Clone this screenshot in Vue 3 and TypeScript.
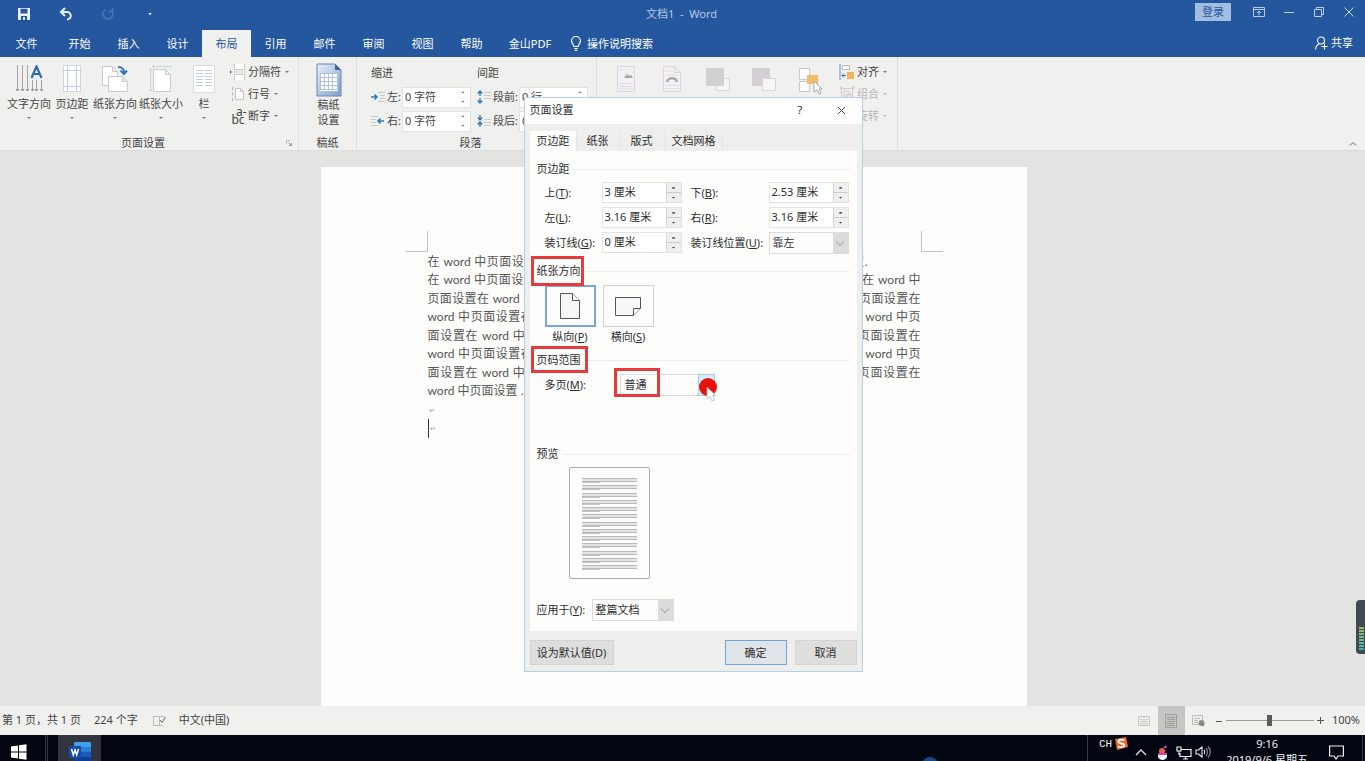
<script setup lang="ts">
import { ref } from 'vue'

const tabs = ['开始', '插入', '设计', '布局', '引用', '邮件', '审阅', '视图', '帮助']
const activeTab = ref('布局')

const phrase = (start: string, count: number, end: string) => start.repeat(count) + end
const lines = [
  { text: phrase('在 word 中页面设置', 4, '.'), kind: 'part' },
  { text: phrase('在 word 中页面设置', 4, '在 word 中'), kind: 'full' },
  { text: phrase('页面设置在 word 中', 4, '页面设置在'), kind: 'full' },
  { text: phrase('word 中页面设置在 ', 4, 'word 中页'), kind: 'full' },
  { text: phrase('面设置在 word 中页', 4, '面设置在'), kind: 'full' },
  { text: phrase('word 中页面设置在 ', 4, 'word 中页'), kind: 'full' },
  { text: phrase('面设置在 word 中页', 4, '面设置在'), kind: 'full' },
  { text: 'word 中页面设置 .', kind: 'last' }
]

const dialogTabs = ['页边距', '纸张', '版式', '文档网格']
const activeDialogTab = ref('页边距')

const margins = ref([
  { id: 'top', name: '上', key: 'T', value: '3 厘米' },
  { id: 'bottom', name: '下', key: 'B', value: '2.53 厘米' },
  { id: 'left', name: '左', key: 'L', value: '3.16 厘米' },
  { id: 'right', name: '右', key: 'R', value: '3.16 厘米' },
  { id: 'gutter', name: '装订线', key: 'G', value: '0 厘米' }
])
const landscape = ref(false)
const zoom = ref(50)
</script>

<template>
  <div class="app">
    <header class="titlebar">
      <div class="quick">
        <button aria-label="保存">
          <svg width="14" height="14" viewBox="0 0 14 14"><path d="M1 1h12v12H1z" fill="#e6f0fb" /><path d="M3.5 1.8h7v4.6h-7zM4 9h6v4H4z" fill="#25579e" /><path d="M6 10h2v3H6z" fill="#e6f0fb" /></svg>
        </button>
        <button aria-label="撤消">
          <svg width="14" height="14" viewBox="0 0 14 14" fill="none" stroke="#e6f0fb" stroke-width="2"><path d="M2 5h6a3.6 3.6 0 0 1 0 7.500" /><path d="M6 1 2 5l4 4" /></svg>
        </button>
        <button aria-label="重复">
          <svg width="14" height="14" viewBox="0 0 14 14" fill="none" stroke="#4a75b3" stroke-width="1.600"><path d="M4.500 2.700A5 5 0 1 0 11 4" /><path d="M7.500 4.500H11.500V1" /></svg>
        </button>
        <button aria-label="自定义"><i class="caret light"></i></button>
      </div>
      <div class="doc-title">文档1&nbsp; -&nbsp; Word</div>
      <div class="window-tools">
        <button class="login">登录</button>
        <button aria-label="功能区显示选项">
          <svg width="12" height="10" viewBox="0 0 12 10" fill="none" stroke="#b9cde8"><path d="M.5.500h11v9H.5zM.5 2.500h11M6 8.500V4.500M4 6l2-2 2 2" /></svg>
        </button>
        <button aria-label="最小化">
          <svg width="10" height="10" viewBox="0 0 10 10" stroke="#b9cde8"><path d="M0 5.500h10" /></svg>
        </button>
        <button aria-label="还原">
          <svg width="10" height="10" viewBox="0 0 10 10" fill="none" stroke="#b9cde8"><path d="M.5 2.500h7v7h-7zM2.500 2V.5h7v7H8" /></svg>
        </button>
        <button aria-label="关闭">
          <svg width="10" height="10" viewBox="0 0 10 10" stroke="#c9d9ee"><path d="M.5.500l9 9M9.500.500l-9 9" /></svg>
        </button>
      </div>
    </header>

    <nav class="tabs">
      <button class="file">文件</button>
      <button v-for="t in tabs" :key="t" :class="{ on: t === activeTab }" @click="activeTab = t">{{ t }}</button>
      <button class="wide">金山PDF</button>
      <button class="tell">
        <svg width="12" height="15" viewBox="0 0 12 15" fill="none" stroke="#fff" stroke-width="1.200"><path d="M4 10.500C4 8.500 1.500 7.800 1.500 5a4.500 4.500 0 0 1 9 0c0 2.800-2.500 3.500-2.500 5.500zM4 12.500h4M4.800 14.300h2.400" /></svg>
        操作说明搜索
      </button>
      <button class="share">
        <svg width="13" height="14" viewBox="0 0 13 14" fill="none" stroke="#fff" stroke-width="1.100"><circle cx="6" cy="4.500" r="3.500" /><path d="M.6 13.500C.8 10.500 2.500 8.500 4.500 7.800M9.500 7.500v6M6.500 10.500h6" /></svg>
        共享
      </button>
    </nav>

    <section class="ribbon">
      <div class="group g-page">
        <div class="content">
          <button class="big w46">
            <svg width="28" height="28" viewBox="0 0 28 28" fill="none" stroke="#a3a3a3"><path d="M2.500 0v25M7.500 0v25M12.500 0v25M17.500 15v10M21.500 15v10M26.500 15v10" /><path d="M1 24l1.500 2L4 24M6 24l1.500 2L9 24M11 24l1.500 2 1.500-2M16 24l1.500 2 1.500-2M20 24l1.500 2 1.500-2M25 24l1.500 2 1.500-2" stroke="#8a8a8a" /><path d="M16.500 13 21.500 1.500 26.500 13M18.500 9h6" stroke="#2b6cb0" stroke-width="2.200" /></svg>
            <span>文字方向</span><i class="caret"></i>
          </button>
          <button class="big w40">
            <svg width="20" height="28" viewBox="0 0 20 28" fill="none"><path d="M1.500.500h17v26h-17z" fill="#fff" stroke="#d0d3d8" /><path d="M5.500 1v25M14.500 1v25M2 5.500h16M2 21.500h16" stroke="#b7cde8" /></svg>
            <span>页边距</span><i class="caret"></i>
          </button>
          <button class="big w46">
            <svg width="28" height="28" viewBox="0 0 28 28" fill="#fff" stroke="#cacaca"><path d="M1.500 1.500h10l5 5v14h-15zM11.500 1.500v5h5" /><path d="M7.500 11.500h14l5 5v10h-19zM21.500 11.500v5h5" /><path d="M17 2c5 0 6 2 6 6M19.500 5.500 23 9l3-3.500" fill="none" stroke="#2f75b5" stroke-width="2" /></svg>
            <span>纸张方向</span><i class="caret"></i>
          </button>
          <button class="big w46">
            <svg width="24" height="28" viewBox="0 0 24 28" fill="#fff" stroke="#cacaca"><path d="M4.500 4.500h12l5 5v17h-17zM16.500 4.500v5h5" /><path d="M3 1.500h19M1.500 3v23M0 4.500h3M0 25.500h3M4.500 0v3M21.500 0v3" stroke="#c7d5ea" /></svg>
            <span>纸张大小</span><i class="caret"></i>
          </button>
          <button class="big w40">
            <svg width="24" height="28" viewBox="0 0 24 28"><path d="M1.500.500h21v27h-21z" fill="#fff" stroke="#dcdcdc" /><path d="M4 5.500h7M4 8.500h7M4 11.500h7M4 14.500h7M4 17.500h7M4 20.500h7M13 5.500h7M13 8.500h7M13 11.500h7M13 14.500h7M13 17.500h7M13 20.500h7" stroke="#c3cee0" /></svg>
            <span>栏</span><i class="caret"></i>
          </button>
          <div class="stack">
            <button><svg width="16" height="16" viewBox="0 0 16 16" fill="#fff" stroke="#c9c9c9"><path d="M4.500 0v5.500h10V0M4.500 16v-5.500h10V16" /><path d="M0 6.500l2 1.500-2 1.500z" fill="#555" stroke="none" /><path d="M3 8h13" stroke-dasharray="2 1" /></svg>分隔符<i class="caret"></i></button>
            <button><svg width="16" height="16" viewBox="0 0 16 16" fill="#fff" stroke="#c4c4c4"><path d="M5.500 2.500h5l3 3v8h-8zM10.500 2.500v3h3" /><path d="M2.500 1v3M2.500 6.500v3M2.500 12v3" stroke="#9dbae0" /></svg>行号<i class="caret"></i></button>
            <button><span class="hyphen" aria-hidden="true"><span>a-</span><span>bc</span></span>断字<i class="caret"></i></button>
          </div>
        </div>
        <div class="caption"><span>页面设置</span><button class="launch" aria-label="页面设置选项"><svg width="6" height="6" viewBox="0 0 6 6" fill="none" stroke="#bbb"><path d="M.5 4V.500H4" /><path d="M3 5.500h2.500V3M2.500 2.500l3 3" stroke="#999" /></svg></button></div>
      </div>

      <div class="group g-draft">
        <div class="content center">
          <button class="big two">
            <svg width="26" height="34" viewBox="0 0 26 34"><defs><linearGradient id="paper" x1="0" y1="0" x2="1" y2="1"><stop offset="0" stop-color="#e9f1fb" /><stop offset="1" stop-color="#7f9fcc" /></linearGradient></defs><path d="M1 1h18l6 6v26H1z" fill="url(#paper)" stroke="#6886b3" /><path d="M19 1v6h6z" fill="#42639a" /><path d="M4 10h18v18H4z" fill="#fff" /><path d="M4 10.500h18M4 14.500h18M4 18.500h18M4 22.500h18M4 26.500h18M4.500 10v17M8.500 10v17M12.500 10v17M16.500 10v17M21.500 10v17" stroke="#b4c0d3" /></svg>
            <span>稿纸</span><span>设置</span>
          </button>
        </div>
        <div class="caption"><span>稿纸</span></div>
      </div>

      <div class="group g-para">
        <div class="content para">
          <div class="col">
            <h3>缩进</h3>
            <div class="measure"><svg width="14" height="12" viewBox="0 0 14 12"><path d="M7 1.500h7M9 4.500h5M9 7.500h5M7 10.500h7" stroke="#c9c9c9" /><path d="M0 6h6M3.500 3.500 6 6l-2.500 2.500" fill="none" stroke="#2f75b5" stroke-width="1.500" /></svg><label for="ind-l">左:</label><span class="spin"><input id="ind-l" value="0 字符" /><span class="arrows"><button aria-label="增加"><i class="up"></i></button><button aria-label="减少"><i class="caret"></i></button></span></span></div>
            <div class="measure"><svg width="14" height="12" viewBox="0 0 14 12"><path d="M0 1.500h7M0 4.500h5M0 7.500h5M0 10.500h7" stroke="#c9c9c9" /><path d="M13 6H7M9.500 3.500 7 6l2.500 2.500" fill="none" stroke="#2f75b5" stroke-width="1.500" /></svg><label for="ind-r">右:</label><span class="spin"><input id="ind-r" value="0 字符" /><span class="arrows"><button aria-label="增加"><i class="up"></i></button><button aria-label="减少"><i class="caret"></i></button></span></span></div>
          </div>
          <div class="col">
            <h3>间距</h3>
            <div class="measure"><svg width="14" height="14" viewBox="0 0 14 14"><path d="M7 2.500h7M7 5.500h7M7 8.500h7" stroke="#c9c9c9" /><path d="M3 1v5M.8 3.500 3 1l2.200 2.500M3 8v5M.8 10.500 3 13l2.200-2.500" fill="none" stroke="#2f75b5" stroke-width="1.300" /></svg><label for="sp-b">段前:</label><span class="spin"><input id="sp-b" value="0 行" /><span class="arrows"><button aria-label="增加"><i class="up"></i></button><button aria-label="减少"><i class="caret"></i></button></span></span></div>
            <div class="measure"><svg width="14" height="14" viewBox="0 0 14 14"><path d="M7 5.500h7M7 8.500h7M7 11.500h7" stroke="#c9c9c9" /><path d="M3 1v5M.8 3.500 3 6l2.200-2.500M3 8v5M.8 10.500 3 8l2.200 2.500" fill="none" stroke="#2f75b5" stroke-width="1.300" /></svg><label for="sp-a">段后:</label><span class="spin"><input id="sp-a" value="0 行" /><span class="arrows"><button aria-label="增加"><i class="up"></i></button><button aria-label="减少"><i class="caret"></i></button></span></span></div>
          </div>
        </div>
        <div class="caption"><span>段落</span><span class="launch"></span></div>
      </div>

      <div class="group g-arrange">
        <div class="content">
          <button class="big w46" aria-label="位置"><svg width="20" height="28" viewBox="0 0 20 28"><path d="M1.500 1.500h17v25h-17z" fill="#f5f0f5" stroke="#ddd4df" /><path d="M3 5h14M3 18.500h14M3 21.500h14M3 24h14" stroke="#e2d9e4" /><path d="M8 5h9v8H8z" fill="#eee" /><path d="M8 13l3-4 2 2 2-1 2 3z" fill="#a5a5a5" /></svg></button>
          <button class="big w46" aria-label="环绕文字"><svg width="20" height="28" viewBox="0 0 20 28"><path d="M1.500 1.500h11l6 6v19h-17zM12.500 1.500v6h6" fill="#f5f0f5" stroke="#ddd4df" /><path d="M3 6h8M3 10h14M3 20.500h14M3 23.500h14" stroke="#e2d9e4" /><path d="M5 17c1-5 9-5 10 0" fill="none" stroke="#aaa" stroke-width="2.500" /></svg></button>
          <button class="big w46" aria-label="上移一层"><svg width="24" height="28" viewBox="0 0 24 28"><path d="M10.500 13.500h13v12h-13z" fill="#f8f5f8" stroke="#dbd3db" /><path d="M0 3h18v18H0z" fill="#d3d0d3" /></svg></button>
          <button class="big w46" aria-label="下移一层"><svg width="24" height="28" viewBox="0 0 24 28"><path d="M0 3h18v18H0z" fill="#d3d0d3" /><path d="M10.500 13.500h13v12h-13z" fill="#f8f5f8" stroke="#dbd3db" /></svg></button>
          <button class="big w46" aria-label="选择窗格"><svg width="24" height="30" viewBox="0 0 24 30"><path d="M1.500 3.500h10v11h-10zM1.500 16.500h10v10h-10z" fill="#fff" stroke="#c9c9c9" /><path d="M9 10h11v9H9z" fill="#f2bc6b" /><path d="M16 16v11l3-2 2 4 2-1-2-4h3z" fill="#fff" stroke="#a8a8a8" /></svg></button>
          <div class="stack">
            <button><svg width="16" height="16" viewBox="0 0 16 16"><path d="M1 0v16" stroke="#5c8fc7" /><path d="M3.500 1.500h7v4h-7z" fill="#fff" stroke="#bbb" /><path d="M8 8h7v7H8z" fill="#f2b35b" /><path d="M7 11.500H3M5 9.500l-2 2 2 2" stroke="#2f75b5" fill="none" /></svg>对齐<i class="caret"></i></button>
            <button class="off"><svg width="16" height="16" viewBox="0 0 16 16" fill="none" stroke="#d1c8d3"><path d="M2.500 2.500h11v11h-11zM5 5h5v5H5zM8 8h4v4H8z" /><path d="M1 1h2v2H1zM13 1h2v2h-2zM1 13h2v2H1zM13 13h2v2h-2z" /></svg>组合<i class="caret"></i></button>
            <button class="off"><svg width="16" height="16" viewBox="0 0 16 16" fill="none" stroke="#d1c8d3"><path d="M1.500 14.500h12L1.500 4z" /></svg>旋转<i class="caret"></i></button>
          </div>
        </div>
      </div>
      <button class="collapse" aria-label="折叠功能区"><svg width="8" height="5" viewBox="0 0 8 5" fill="none" stroke="#666"><path d="M1 4.500 4 1.500l3 3" /></svg></button>
    </section>

    <main class="workspace">
      <article class="page">
        <div class="crops"><span class="crop-l"></span><span class="crop-r"></span></div>
        <div class="text">
          <p v-for="(l, i) in lines" :key="i" :class="l.kind">{{ l.text }}</p>
          <p class="mark">↵</p>
          <p class="mark cursor">↵</p>
        </div>
      </article>
    </main>

    <footer class="status">
      <span class="pages">第 1 页，共 1 页</span>
      <span class="words">224 个字</span>
      <svg class="proof" width="13" height="12" viewBox="0 0 13 12" fill="none" stroke="#bbb"><path d="M6.500 1.500h-6v9h6zM6.500 1.500h5M6.500 10.500h3" /><path d="M7 5l2 2.500L12.500 2" stroke="#666" /></svg>
      <span>中文(中国)</span>
      <div class="views">
        <button aria-label="阅读视图"><svg width="12" height="12" viewBox="0 0 12 12" fill="none" stroke="#c4c4c4"><path d="M.5 1.500h11v9H.5zM6 1v10M2 4.500h2.500M2 6.500h2.500M2 8.500h2.500M7.500 4.500H10M7.500 6.500H10M7.500 8.500H10" /></svg></button>
        <button class="on" aria-label="页面视图"><svg width="14" height="14" viewBox="0 0 14 14" fill="none" stroke="#9c9c9c"><path d="M1.500.500h11v13h-11zM3 3.500h8M3 5.500h8M3 7.500h8M3 9.500h8M3 11.500h8" /></svg></button>
        <button aria-label="Web 版式视图"><svg width="13" height="13" viewBox="0 0 13 13" fill="none" stroke="#bbb"><path d="M7 10.500H.500v-9h10V6M2 4.500h6M2 6.500h4M2 8.500h4" /><circle cx="9.500" cy="9" r="3" fill="#8e8e8e" stroke="none" /><path d="M9 9.500l3 2.500" stroke="#666" /></svg></button>
      </div>
      <button class="zoom-btn" aria-label="缩小"><svg width="6" height="6" viewBox="0 0 6 6" stroke="#555"><path d="M0 3.500h6" /></svg></button>
      <input v-model="zoom" class="zoom" type="range" min="0" max="100" aria-label="缩放" />
      <button class="zoom-btn" aria-label="放大"><svg width="7" height="7" viewBox="0 0 7 7" stroke="#555"><path d="M0 3.500h7M3.500 0v7" /></svg></button>
      <span class="percent">100%</span>
    </footer>

    <div class="taskbar">
      <button class="start" aria-label="开始菜单"><svg width="16" height="16" viewBox="0 0 16 16" fill="#fff"><path d="M0 2.500 7 1.500V7.500H0zM8 1.300 15.500.300V7.500H8zM0 8.500h7v6L0 13.500zM8 8.500h7.500v7.200L8 14.700z" /></svg></button>
      <i class="sep double"></i>
      <button class="word" aria-label="Word"><svg width="22" height="20" viewBox="0 0 22 20"><path d="M6 0h15a1 1 0 0 1 1 1v5H5V1a1 1 0 0 1 1-1z" fill="#3fa0ea" /><path d="M5 5h17v5H5z" fill="#2b7cd3" /><path d="M5 10h17v5H5z" fill="#185abd" /><path d="M5 15h17v5H5z" fill="#103f91" /><rect y="4" width="12" height="12" rx="1" fill="#164ba5" /><path d="M2.500 7 4.300 13 6 8l1.700 5L9.500 7" fill="none" stroke="#fff" stroke-width="1.500" /></svg></button>
      <i class="orb"></i>
      <div class="tray">
        <i class="sep"></i>
        <span class="ime">CH</span>
        <svg class="sogou" width="14" height="13" viewBox="0 0 14 13"><path d="M1 2 12 0l2 10-11 3z" fill="#f0642a" /><path d="M10.500 3.200C7 2 4 3 4.500 5s6 1 5.800 3.200S6 10.500 3.800 9.500" fill="none" stroke="#fff" stroke-width="1.800" /></svg>
        <svg class="t-up" width="12" height="8" viewBox="0 0 12 8" fill="none" stroke="#e4e4e4" stroke-width="1.300"><path d="M1 7l5-5 5 5" /></svg>
        <svg class="t-pet" width="11" height="15" viewBox="0 0 11 15"><circle cx="5" cy="6" r="3" fill="#e35a5a" /><path d="M6 3l3-3 1 3z" fill="#c747b9" /><path d="M1 8c3 2 6 2 9 0v4c-2 4-7 4-9 0z" fill="#fff" /><path d="M1 8h9v2H1z" fill="#e040a0" /></svg>
        <svg class="t-net" width="16" height="14" viewBox="0 0 16 14" fill="none" stroke="#eee" stroke-width="1.200"><path d="M5 3.500h10v7H4V7M7 13h5M9.500 10.500V13" /><path d="M1 1h4v4H1zM3 5v4" /></svg>
        <svg class="t-vol" width="16" height="14" viewBox="0 0 16 14" fill="none" stroke="#eee" stroke-width="1.100"><path d="M1 5v4h2.500L7 12V2L3.500 5zM9 5c1 1 1 3 0 4" /><path d="M11 3c2 2 2 6 0 8M13 1.500c3 3 3 8 0 11" stroke="#8a8f99" /></svg>
        <div class="clock"><span>9:16</span><span>2019/9/6 星期五</span></div>
        <svg class="t-note" width="15" height="15" viewBox="0 0 15 15" fill="none" stroke="#eee" stroke-width="1.200"><path d="M.6 1h13.800v10H9l-2 3-2-3H.6z" /></svg>
        <i class="sep"></i>
      </div>
    </div>

    <div class="gauge"><i></i></div>

    <form class="dialog" role="dialog" aria-label="页面设置" @submit.prevent>
      <div class="d-title">
        <span>页面设置</span>
        <button type="button" aria-label="帮助">?</button>
        <button type="button" aria-label="关闭"><svg width="9" height="9" viewBox="0 0 9 9" stroke="#444"><path d="M1 1l7 7M8 1l-7 7" /></svg></button>
      </div>
      <div class="d-tabs">
        <button v-for="t in dialogTabs" :key="t" type="button" :class="{ on: t === activeDialogTab }" @click="activeDialogTab = t">{{ t }}</button>
      </div>
      <div class="panel">
        <h4><span>页边距</span></h4>
        <div class="fields">
          <template v-for="m in margins" :key="m.id">
            <label :for="m.id">{{ m.name }}(<u>{{ m.key }}</u>):</label>
            <span class="spin boxed"><input :id="m.id" v-model="m.value" /><span class="arrows"><button type="button" aria-label="增加"><i class="up"></i></button><button type="button" aria-label="减少"><i class="caret"></i></button></span></span>
          </template>
          <label for="gutter-pos">装订线位置(<u>U</u>):</label>
          <span class="pick"><select id="gutter-pos"><option>靠左</option></select><i class="chev"></i></span>
        </div>

        <h4 class="sec"><span class="flag f-orient">纸张方向</span></h4>
        <div class="orient">
          <button type="button" :class="{ on: !landscape }" @click="landscape = false">
            <span class="card"><svg width="20" height="26" viewBox="0 0 20 26" fill="#f6f6f6" stroke="#555"><path d="M.5.500h12l7 7v18H.5z" /><path d="M12.500.500v7h7" fill="#fff" /></svg></span>
            <span>纵向(<u>P</u>)</span>
          </button>
          <button type="button" :class="{ on: landscape }" @click="landscape = true">
            <span class="card"><svg width="26" height="19" viewBox="0 0 26 19" fill="#f6f6f6" stroke="#555"><path d="M.5.500h25v11l-7 7H.5z" /><path d="M18.500 18.500v-7h7" fill="#fff" /></svg></span>
            <span>横向(<u>S</u>)</span>
          </button>
        </div>

        <h4 class="range"><span class="flag f-range">页码范围</span></h4>
        <div class="multi">
          <label for="multi">多页(<u>M</u>):</label>
          <span class="pick hot">
            <select id="multi"><option>普通</option></select><i class="drop"></i>
            <i class="flag-box"></i>
            <svg class="pointer" width="20" height="26" viewBox="0 0 20 26"><circle cx="9" cy="10" r="9" fill="#e8120c" /><path d="M8 10v12l3-2.500 2 4.500 2.500-1-2-4.500H17z" fill="#fff" stroke="#b9a9a9" stroke-width=".7" /></svg>
          </span>
        </div>

        <h4 class="pre"><span>预览</span></h4>
        <div class="preview"><div v-for="n in 13" :key="n"><i class="long"></i><i class="short"></i></div></div>
        <div class="apply">
          <label for="apply">应用于(<u>Y</u>):</label>
          <span class="pick"><select id="apply"><option>整篇文档</option></select><i class="chev"></i></span>
        </div>
      </div>
      <div class="d-foot">
        <button type="button" class="def">设为默认值(D)</button>
        <button type="submit" class="ok">确定</button>
        <button type="button">取消</button>
      </div>
    </form>
  </div>
</template>

<style>
body {
  background: #e3e4e2;
}
</style>

<style scoped>
* {
  box-sizing: border-box;
}
.app {
  position: relative;
  display: flex;
  flex-direction: column;
  height: 100vh;
  overflow: hidden;
  font: 11px/16px "Noto Sans", "Noto Sans CJK SC", sans-serif;
  color: #444;
  background: #e3e4e2;
}
button,
input,
select {
  font: inherit;
  color: inherit;
  border: 0;
  padding: 0;
  margin: 0;
  background: none;
}
svg {
  flex: none;
  display: block;
}
h3,
h4,
p {
  margin: 0;
  font-size: inherit;
  font-weight: 400;
}
.caret,
.up {
  display: block;
  width: 4px;
  height: 2px;
  background: #777;
  clip-path: polygon(0 0, 100% 0, 50% 100%);
}
.up {
  clip-path: polygon(50% 0, 100% 100%, 0 100%);
}
.caret.light {
  height: 3px;
  background: #e6f0fb;
}

/* Title bar */
.titlebar {
  display: grid;
  grid-template-columns: 1fr auto 1fr;
  align-items: center;
  flex: 0 0 30px;
  background: #25579e;
}
.quick,
.window-tools {
  display: flex;
  align-items: center;
}
.quick {
  padding: 0 0 2px 3px;
}
.quick button {
  display: flex;
  align-items: center;
  justify-content: center;
  width: 42px;
  height: 28px;
}
.doc-title {
  padding: 0 2px 2px 0;
  color: #b4c9e6;
}
.window-tools {
  justify-content: flex-end;
  padding: 0 1px 6px 0;
}
.window-tools button {
  display: flex;
  align-items: center;
  justify-content: center;
  width: 30px;
  height: 18px;
}
.window-tools .login {
  width: 36px;
  margin-right: 13px;
  color: #25579e;
  background: #a3bddf;
}

/* Ribbon tabs */
.tabs {
  display: flex;
  flex: 0 0 27px;
  color: #fff;
  background: #25579e;
}
.tabs button {
  width: 49px;
  text-align: center;
}
.tabs .on {
  color: #25579e;
  background: #f0f0ee;
}
.tabs .file {
  width: 53px;
  margin-right: 2px;
}
.tabs .wide {
  width: 68px;
}
.tabs .tell,
.tabs .share {
  display: flex;
  align-items: center;
  gap: 5px;
  width: auto;
  padding-left: 6px;
}
.tabs .share {
  gap: 3px;
  margin-left: auto;
  padding: 0 12px 2px 0;
}

/* Ribbon */
.ribbon {
  display: flex;
  flex: 0 0 94px;
  background: #f0f0ee;
  border-bottom: 1px solid #dcdcda;
}
.group {
  display: flex;
  flex-direction: column;
  border-right: 1px solid #dedede;
}
.g-page {
  width: 299px;
}
.g-draft {
  width: 58px;
}
.g-para {
  width: 240px;
}
.g-arrange {
  width: 301px;
}
.content {
  display: flex;
  flex: 1;
  padding: 4px 0 0 6px;
}
.content.center {
  justify-content: center;
  padding-left: 2px;
}
.big {
  display: flex;
  flex-direction: column;
  align-items: center;
  height: 60px;
  padding-top: 4px;
  white-space: nowrap;
}
.big span {
  margin-top: 3px;
}
.big .caret {
  margin-top: 5px;
}
.w46 {
  width: 46px;
}
.w40 {
  width: 40px;
}
.big.two {
  padding-top: 2px;
}
.big.two span {
  margin-top: 0;
  line-height: 15px;
}
.stack {
  display: flex;
  flex-direction: column;
  padding-left: 6px;
}
.stack button {
  display: flex;
  align-items: center;
  gap: 2px;
  height: 22px;
  white-space: nowrap;
}
.stack .caret {
  margin-left: 2px;
}
.stack .off {
  color: #b5b5b5;
}
.stack .off .caret {
  background: #bbb;
}
.hyphen {
  display: flex;
  flex-direction: column;
  width: 16px;
  font-size: 12px;
  line-height: 8px;
}
.hyphen span:first-child {
  padding-left: 6px;
}
.caption {
  display: flex;
  height: 15px;
  line-height: 16px;
  text-align: center;
}
.caption span:first-child {
  flex: 1;
}
.launch {
  display: flex;
  align-items: center;
  width: 12px;
}
.para {
  gap: 6px;
  padding: 7px 0 0 14px;
}
.para h3 {
  height: 21px;
  line-height: 18px;
}
.measure {
  display: flex;
  align-items: center;
  height: 24px;
}
.measure label {
  padding-left: 2px;
  white-space: nowrap;
}
.spin {
  display: flex;
  width: 69px;
  height: 21px;
  margin-left: 1px;
  background: #fff;
  border: 1px solid #e2e2e2;
}
.spin input {
  flex: 1;
  min-width: 0;
  padding-left: 2px;
}
.arrows {
  display: flex;
  flex-direction: column;
  width: 14px;
}
.arrows button {
  display: flex;
  flex: 1;
  align-items: center;
  justify-content: center;
}
.collapse {
  align-self: flex-end;
  margin: 0 8px 4px auto;
}

/* Document */
.workspace {
  display: flex;
  flex: 1;
  justify-content: center;
  min-height: 0;
  padding: 16px 18px 0 0;
  overflow: hidden;
}
.page {
  width: 706px;
  padding: 64px 106px 0 107px;
  background: #fdfefc;
}
.crops {
  display: flex;
  justify-content: space-between;
  margin: 0 -22px;
}
.crops span {
  width: 22px;
  height: 21px;
  border-bottom: 1px solid #c4c4c4;
}
.crops .crop-l {
  border-right: 1px solid #c4c4c4;
}
.crops .crop-r {
  border-left: 1px solid #c4c4c4;
}
.text {
  display: grid;
  grid-auto-rows: 18px 19px;
  padding-top: 1px;
  font: 12px/18px Lato, "Noto Sans CJK SC", sans-serif;
  color: #555;
}
.text p {
  white-space: nowrap;
}
.text .full,
.text .part {
  white-space: normal;
  text-align: justify;
  text-align-last: justify;
}
.text .part {
  margin-right: 53px;
}
.text .mark {
  padding-left: 1px;
  font-size: 7px;
  color: #999;
}
.text .cursor {
  border-left: 1px solid #333;
}

/* Status bar */
.status {
  display: flex;
  align-items: center;
  flex: 0 0 29px;
  padding: 0 5px 0 2px;
  background: #f0f0ee;
}
.status > span {
  margin-bottom: 2px;
}
.status .words {
  margin: 0 15px 2px 13px;
}
.proof {
  margin-right: 13px;
}
.views {
  display: flex;
  align-self: stretch;
  margin-left: auto;
}
.views button {
  display: flex;
  align-items: center;
  justify-content: center;
  width: 27px;
}
.views .on {
  background: #c6c6c5;
}
.zoom-btn {
  display: flex;
  align-items: center;
  justify-content: center;
  width: 14px;
  height: 14px;
}
.zoom {
  width: 88px;
  height: 14px;
  appearance: none;
  background: linear-gradient(#9a9a9a, #9a9a9a) center / 100% 1px no-repeat;
}
.zoom::-webkit-slider-thumb {
  width: 5px;
  height: 11px;
  appearance: none;
  background: #5c5c5c;
}
.percent {
  margin-left: 4px;
}

/* Taskbar */
.taskbar {
  display: flex;
  flex: 0 0 26px;
  align-items: flex-start;
  overflow: hidden;
  color: #f2f2f2;
  background: #020611;
}
.start {
  padding: 9px 0 0 11px;
}
.sep {
  width: 3px;
  height: 26px;
  border-left: 1px solid #343843;
}
.sep.double {
  margin: 0 10px 0 18px;
  border-right: 1px solid #343843;
}
.word {
  display: flex;
  justify-content: center;
  width: 43px;
  height: 26px;
  padding-top: 7px;
  background: #30353f;
}
.orb {
  width: 16px;
  height: 16px;
  margin: 22px 0 0 auto;
  border-radius: 50%;
  background: #134a86;
}
.tray {
  display: flex;
  align-items: flex-start;
  margin-left: 149px;
}
.ime {
  margin-left: 9px;
  font: 11px/18px "Liberation Mono", monospace;
}
.sogou {
  margin: 2px 0 0 2px;
}
.t-up {
  margin: 13px 10px 0 7px;
}
.t-pet {
  margin: 10px 8px 0 0;
}
.t-net {
  margin: 11px 3px 0 0;
}
.t-vol {
  margin: 10px 15px 0 0;
}
.clock {
  display: flex;
  flex-direction: column;
  align-items: center;
  padding-top: 1px;
  white-space: nowrap;
}
.t-note {
  margin: 10px 18px 0 21px;
}
.gauge {
  position: absolute;
  top: 600px;
  right: 0;
  width: 9px;
  height: 54px;
  padding: 27px 1px 4px 3px;
  border-radius: 4px 0 0 4px;
  background: #414954;
}
.gauge i {
  display: block;
  height: 100%;
  background: repeating-linear-gradient(#41495400 0 2px, #414954 2px 3px), linear-gradient(#9cc05a, #3fb5ab);
}

/* Page setup dialog */
.dialog {
  position: absolute;
  top: 97px;
  left: calc(50% - 159px);
  width: 339px;
  padding-bottom: 6px;
  color: #2c2c2c;
  background: #eeeeed;
  border: 1px solid #b5cfea;
}
.d-title {
  display: flex;
  align-items: center;
  height: 26px;
  padding: 0 0 2px 5px;
  background: #fff;
}
.d-title span {
  flex: 1;
}
.d-title button {
  display: flex;
  align-items: center;
  justify-content: center;
  width: 41px;
  height: 24px;
}
.d-tabs {
  display: flex;
  padding: 7px 5px 0;
}
.d-tabs button {
  height: 20px;
  padding: 0 11px 0 10px;
  border-right: 1px solid #e6e6e6;
}
.d-tabs button.on {
  padding: 0 6px 0 7px;
  background: #fdfefc;
}
.d-tabs button:last-child {
  padding: 0 6px 0 7px;
}
.panel {
  margin: 0 5px;
  padding: 8px 7px 10px;
  background: #fdfefc;
}
h4 {
  display: flex;
  align-items: center;
  gap: 3px;
  height: 20px;
}
h4::after {
  flex: 1;
  height: 1px;
  background: #ececec;
  content: "";
}
.fields {
  display: grid;
  grid-template-columns: 57px 80px 87px 80px;
  row-gap: 3px;
  margin: 3px 0 0 8px;
}
.fields label {
  line-height: 22px;
  white-space: nowrap;
}
.fields label:nth-of-type(even) {
  padding-left: 9px;
}
.spin.boxed {
  width: 100%;
  margin: 0;
}
.boxed input {
  padding-bottom: 2px;
}
.boxed .arrows {
  width: 15px;
  background: #efefef;
  border-left: 1px solid #d6d6d6;
}
.boxed .arrows button + button {
  border-top: 1px solid #ccc;
}
.boxed .arrows i {
  background: #333;
}
.pick {
  position: relative;
  display: flex;
  height: 22px;
  background: #fdfefc;
  border: 1px solid #dcdcdc;
}
.pick select {
  flex: 1;
  min-width: 0;
  padding-left: 3px;
  appearance: none;
}
.chev {
  display: flex;
  align-items: center;
  justify-content: center;
  width: 15px;
  background: #dcdcdc;
}
.chev::before {
  width: 5px;
  height: 5px;
  margin-top: -3px;
  border: solid #aaa;
  border-width: 0 1px 1px 0;
  transform: rotate(45deg);
  content: "";
}
.sec {
  margin-top: 7px;
}
.flag {
  position: relative;
}
.flag::after {
  position: absolute;
  inset: -7px -3px -7px -6px;
  border: 3px solid #e53b3c;
  content: "";
}
.f-range::after {
  inset: -6px -7px -5px -6px;
}
.orient {
  display: flex;
  gap: 7px;
  margin: 4px 0 0 8px;
}
.orient button {
  display: flex;
  flex-direction: column;
  align-items: center;
}
.card {
  display: flex;
  align-items: center;
  justify-content: center;
  width: 51px;
  height: 42px;
  margin-bottom: 2px;
  border: 1px solid #cfcfcf;
}
.on .card {
  border: 2px solid #7ba6d6;
}
.range {
  margin-top: 5px;
}
.multi {
  display: flex;
  align-items: center;
  margin: 4px 0 0 8px;
}
.multi label {
  width: 75px;
}
.hot {
  width: 95px;
}
.hot select {
  padding-left: 4px;
}
.drop {
  width: 17px;
  margin: -1px;
  background: #d9eaf9;
  border: 1px solid #a6ccec;
}
.flag-box {
  position: absolute;
  top: -7px;
  left: -7px;
  width: 46px;
  height: 29px;
  border: 3px solid #e53b3c;
}
.pointer {
  position: absolute;
  top: 2px;
  right: -5px;
}
.pre {
  margin-top: 48px;
}
.preview {
  display: flex;
  flex-direction: column;
  justify-content: space-between;
  width: 81px;
  height: 112px;
  margin: 3px 0 0 32px;
  padding: 10px 12px 8px;
  border: 1px solid #a9a9a9;
  border-radius: 2px;
}
.preview i {
  display: block;
}
.preview .long {
  height: 4px;
  background: #e4e4e4;
  border: solid #b9b9b9;
  border-width: 1px 0;
}
.preview .short {
  width: 18px;
  height: 1px;
  background: #c4c4c4;
}
.apply {
  display: flex;
  align-items: center;
  margin-top: 20px;
}
.apply label {
  width: 55px;
  white-space: nowrap;
}
.apply .pick {
  width: 82px;
}
.d-foot {
  display: flex;
  gap: 8px;
  padding: 9px 5px 0;
}
.d-foot button {
  width: 62px;
  height: 25px;
  background: #dededd;
  border: 1px solid #d3d3d3;
}
.d-foot .def {
  width: 84px;
  margin-right: auto;
}
.d-foot .ok {
  background: #dfe4e9;
  border: 1px solid #6fa3db;
}
</style>
